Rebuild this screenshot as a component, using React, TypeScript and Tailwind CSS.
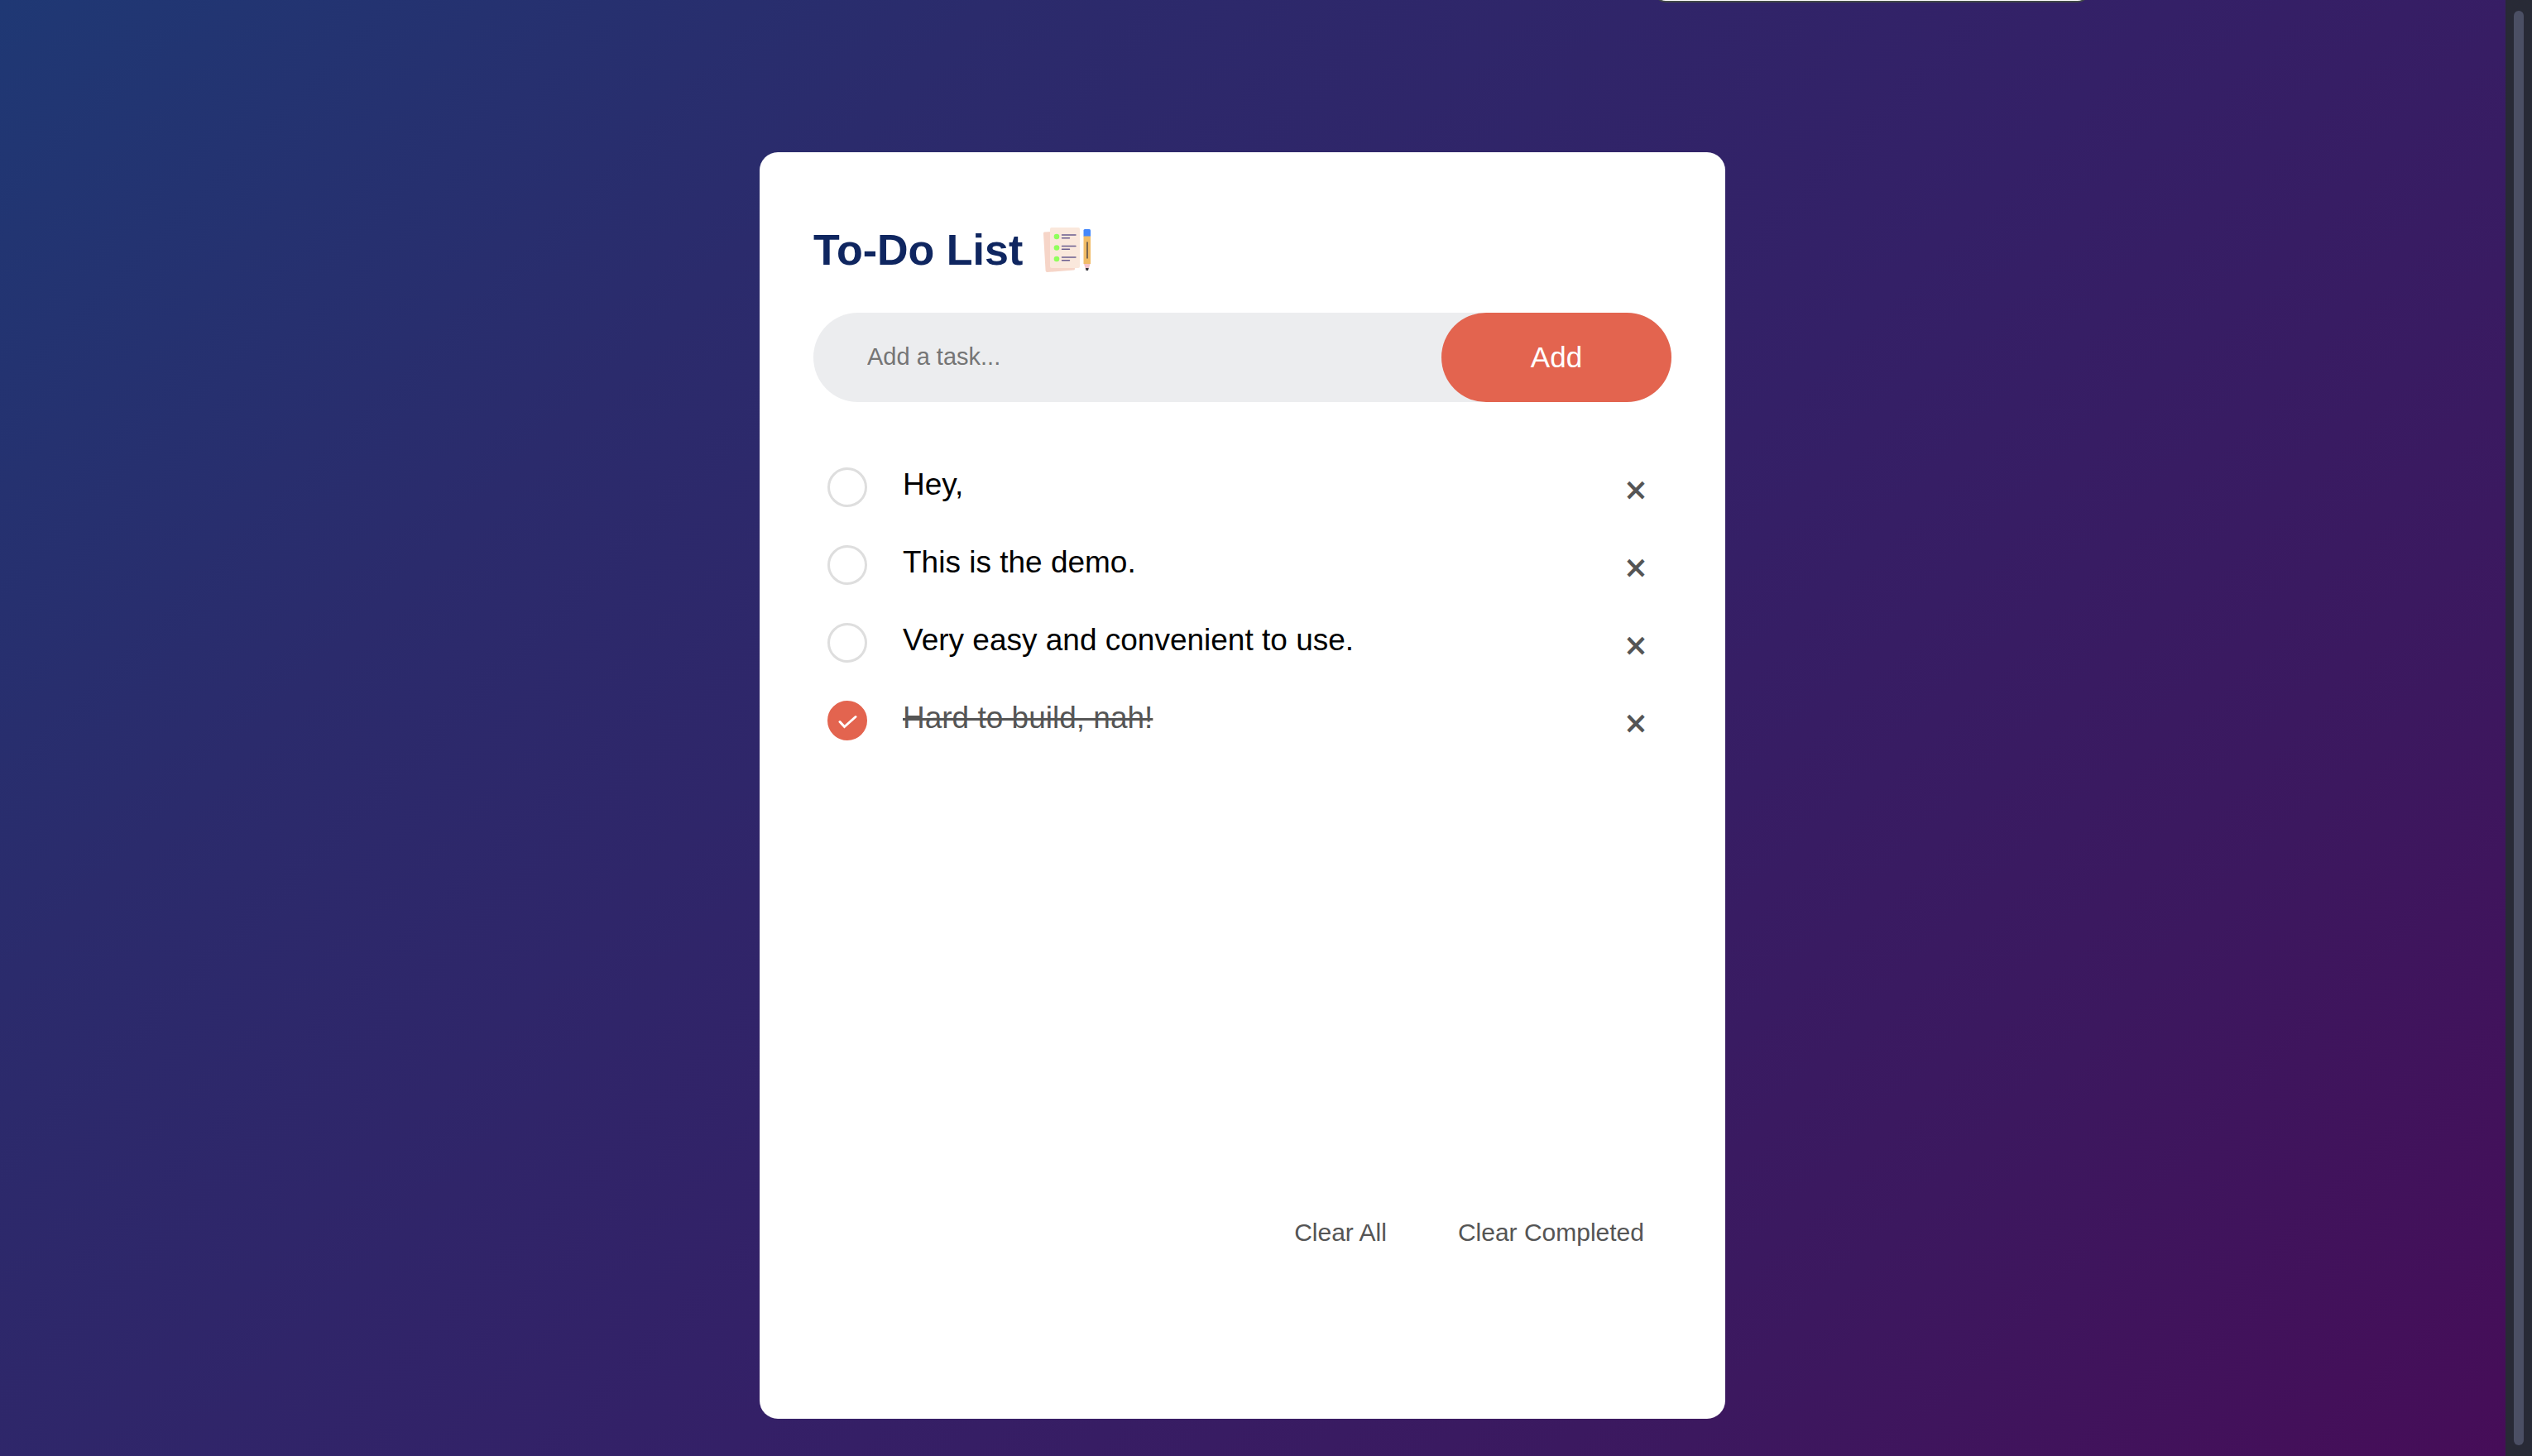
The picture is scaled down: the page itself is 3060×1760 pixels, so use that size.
import { useState } from "react";

type Task = { id: number; text: string; done: boolean };

const initialTasks: Task[] = [
  { id: 1, text: "Hey,", done: false },
  { id: 2, text: "This is the demo.", done: false },
  { id: 3, text: "Very easy and convenient to use.", done: false },
  { id: 4, text: "Hard to build, nah!", done: true },
];

function ChecklistIcon() {
  return (
    <svg viewBox="0 0 64 64" className="size-16" aria-hidden="true">
      <path d="M4 10.5 38 9l3 46q0 1.500-1.500 1.500L7.500 59q-1.800 0-1.900-1.800L3 12.500Q3 10.500 4 10.500Z" fill="#f6d5c8" />
      <rect x="11" y="5" width="36" height="49" rx="2" fill="#fae8dc" />
      {[16, 29.5, 43].map((y) => (
        <g key={y}>
          <circle cx="19" cy={y} r="3.300" fill="#90ff5c" />
          <path d={`M25.500 ${y - 2}h16.500M25.500 ${y + 1.7}h9`} stroke="#6a5c8e" strokeWidth="1.400" strokeLinecap="round" />
        </g>
      ))}
      <path d="M51.500 15h8.500v34h-8.500z" fill="#f0bc67" />
      <path d="M51.500 8.500q0-1.500 1.500-1.500h5.500Q60 7 60 8.500V15.500h-8.500z" fill="#4387fb" />
      <path d="M52 49h7.500L58 54h-4.500z" fill="#f3c3c9" />
      <path d="M53.800 54h4L57 57h-2.400z" fill="#36353b" />
      <path d="M56 23v19" stroke="#3d3a40" strokeWidth="1.300" strokeLinecap="round" />
    </svg>
  );
}

function TaskRow({ task, onToggle, onRemove }: { task: Task; onToggle: () => void; onRemove: () => void }) {
  return (
    <li className="flex h-[94px] items-center pr-[19px] pl-[17px]">
      <span className="grid shrink-0">
        <input
          id={`task-${task.id}`}
          type="checkbox"
          checked={task.done}
          onChange={onToggle}
          className="peer col-start-1 row-start-1 size-12 cursor-pointer appearance-none rounded-full border-3 border-[#dedede] checked:border-[#e3644f] checked:bg-[#e3644f]"
        />
        <svg
          viewBox="0 0 48 48"
          className="pointer-events-none invisible col-start-1 row-start-1 size-12 peer-checked:visible"
          aria-hidden="true"
        >
          <path d="m15 25.500 5.500 6L34 19.500" fill="none" stroke="white" strokeWidth="3" strokeLinecap="round" />
        </svg>
      </span>
      <label
        htmlFor={`task-${task.id}`}
        className={
          task.done
            ? "flex-1 cursor-pointer pb-1.5 pl-[43px] text-[37px] leading-[42px] text-[#555] line-through decoration-3"
            : "flex-1 cursor-pointer pb-1.5 pl-[43px] text-[37px] leading-[42px] text-black"
        }
      >
        {task.text}
      </label>
      <button
        type="button"
        aria-label={`Remove ${task.text}`}
        onClick={onRemove}
        className="w-12 shrink-0 cursor-pointer pt-1.5 text-center font-['Open_Sans',sans-serif] text-[48px] leading-[48px] font-semibold text-[#555]"
      >
        ×
      </button>
    </li>
  );
}

export default function App() {
  const [tasks, setTasks] = useState(initialTasks);
  const [draft, setDraft] = useState("");

  const addTask = () => {
    if (!draft.trim()) return;
    setTasks([...tasks, { id: Date.now(), text: draft.trim(), done: false }]);
    setDraft("");
  };

  return (
    <div className="relative flex min-h-screen overflow-hidden font-['Liberation_Sans',Arial,sans-serif]">
      <main className="flex flex-1 items-start justify-center bg-[linear-gradient(135deg,#1f3874,#2b2b6c_25%,#342067_55%,#3c185f_79%,#460d58)] pt-[184px] pr-[25px] pb-[45px]">
        <section className="flex min-h-[1531px] w-full max-w-[1167px] flex-col rounded-[22px] bg-white px-[65px] pt-[86px] pb-[196px]">
          <h1 className="flex items-center gap-[22px] text-[52px] leading-16 font-bold text-[#0f2660]">
            To-Do List
            <ChecklistIcon />
          </h1>
          <form
            className="mt-11 flex h-[108px] rounded-full bg-[#ecedef]"
            onSubmit={(event) => {
              event.preventDefault();
              addTask();
            }}
          >
            <input
              type="text"
              aria-label="New task"
              placeholder="Add a task..."
              value={draft}
              onChange={(event) => setDraft(event.target.value)}
              className="min-w-0 flex-1 bg-transparent pl-[65px] text-[29px] outline-none placeholder:text-[#757575]"
            />
            <button type="submit" className="w-[278px] cursor-pointer rounded-full bg-[#e3644f] text-[35px] text-white">
              Add
            </button>
          </form>
          <ul className="mt-14 flex-1">
            {tasks.map((task) => (
              <TaskRow
                key={task.id}
                task={task}
                onToggle={() => setTasks(tasks.map((t) => (t.id === task.id ? { ...t, done: !t.done } : t)))}
                onRemove={() => setTasks(tasks.filter((t) => t.id !== task.id))}
              />
            ))}
          </ul>
          <div className="flex justify-end gap-[86px] pr-[33px] text-[30px] leading-[58px] text-[#555]">
            <button type="button" className="cursor-pointer" onClick={() => setTasks([])}>
              Clear All
            </button>
            <button type="button" className="cursor-pointer" onClick={() => setTasks(tasks.filter((t) => !t.done))}>
              Clear Completed
            </button>
          </div>
        </section>
      </main>
      {/* Scroll track */}
      <div className="flex w-8 shrink-0 bg-[#282a36] py-[13px] pl-2.5" aria-hidden="true">
        <div className="w-3 rounded-full bg-[#4b4f64]" />
      </div>
      {/* Lower edge of a popup that hangs above the page */}
      <div
        className="absolute -top-7 right-[535px] h-[31px] w-[526px] rounded-[14px] border-2 border-[#414848] bg-white"
        aria-hidden="true"
      />
    </div>
  );
}
